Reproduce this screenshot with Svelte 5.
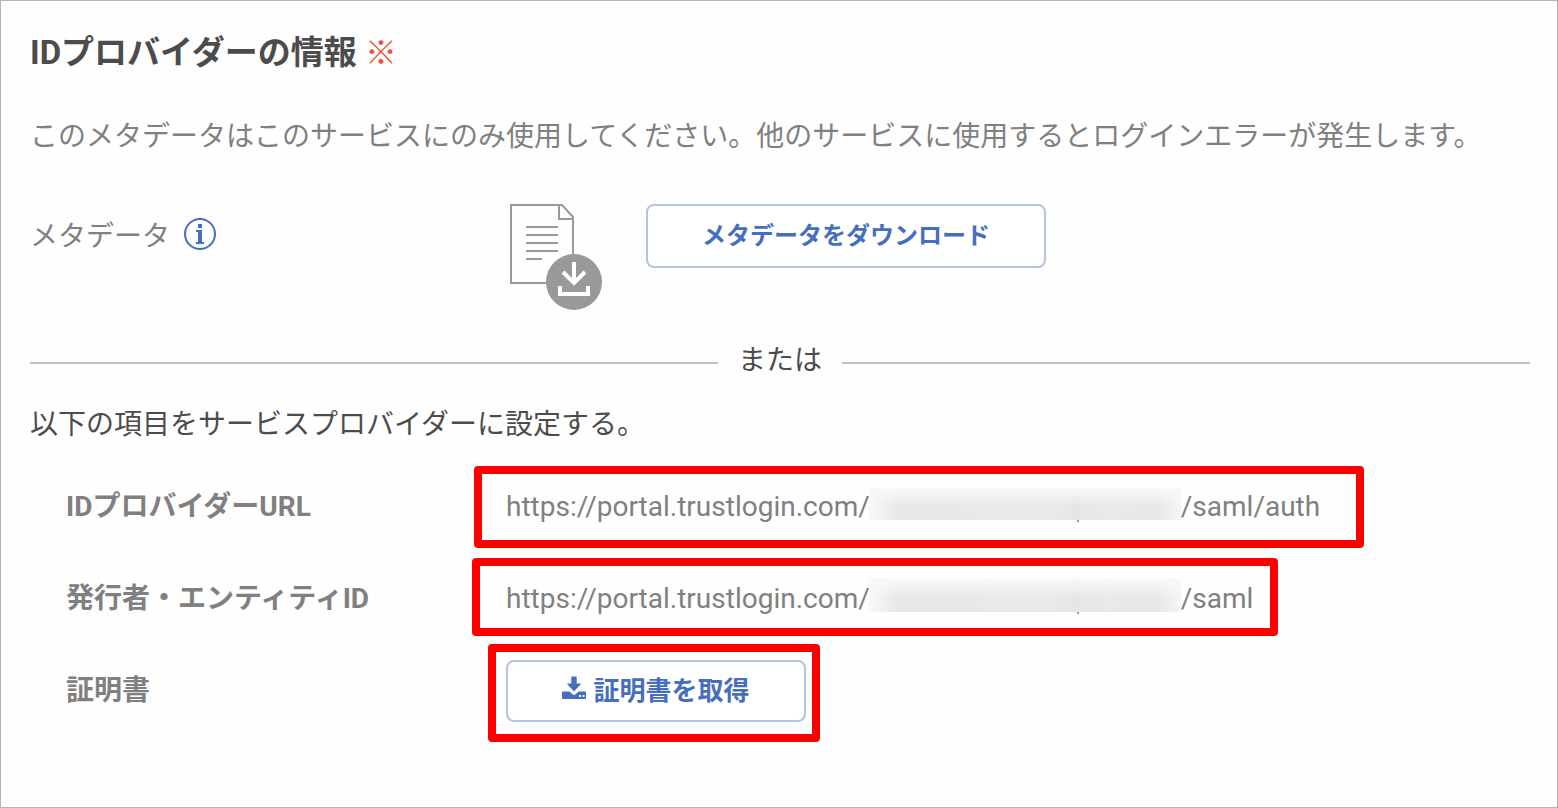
<script lang="ts">
  interface Endpoint {
    label: string;
    host: string;
    path: string;
    kind: string;
  }

  const endpoints: Endpoint[] = [
    { label: 'IDプロバイダーURL', host: 'https://portal.trustlogin.com/', path: '/saml/auth', kind: 'url' },
    { label: '発行者・エンティティID', host: 'https://portal.trustlogin.com/', path: '/saml', kind: 'entity' },
  ];
</script>

<section class="panel">
  <h1>IDプロバイダーの情報 <span class="required">※</span></h1>
  <p class="note">このメタデータはこのサービスにのみ使用してください。他のサービスに使用するとログインエラーが発生します。</p>

  <div class="metadata">
    <div class="meta-label">
      <span>メタデータ</span>
      <button class="info" type="button" aria-label="メタデータについて">
        <svg viewBox="0 0 32 32" width="32" height="32" fill="none">
          <circle cx="16" cy="16" r="15" stroke="#466ebe" stroke-width="2" />
          <path d="M14 6h4v4h-4zM12 12h6v12h2v2h-8v-2h2V14h-2z" fill="#466ebe" />
        </svg>
      </button>
    </div>
    <svg class="file" viewBox="0 0 92 106" width="92" height="106" fill="none">
      <path d="M1 1h51l11 12v66H1zM49 1v14h14" stroke="#999" stroke-width="2" />
      <path d="M16 23h32M16 31h32M16 39h32M16 47h32M16 55h16" stroke="#999" stroke-width="2" />
      <circle cx="64" cy="78" r="28" fill="#999" />
      <path d="M64 58v21M53 68l11 11 11-11" stroke="#fff" stroke-width="4" />
      <path d="M50 82v8h28v-8" stroke="#fff" stroke-width="4" />
    </svg>
    <button class="outline meta-btn" type="button">メタデータをダウンロード</button>
  </div>

  <div class="divider"><span>または</span></div>

  <p class="lead">以下の項目をサービスプロバイダーに設定する。</p>

  <dl>
    {#each endpoints as item}
      <div class="row">
        <dt>{item.label}</dt>
        <dd class={item.kind}>{item.host}<span class="masked"></span>{item.path}</dd>
      </div>
    {/each}
    <div class="row">
      <dt>証明書</dt>
      <dd class="cert">
        <button class="outline cert-btn" type="button">
          <svg viewBox="0 0 24 24" width="24" height="24" fill="#466ebe">
            <path d="M10 .5h4q.7 0 .7.7V7.500H18q1.200 0 .5 1L12.500 15q-.5.5-1 0L5.500 8.500q-.7-1 .5-1H9.300V1.200q0-.7.7-.7z" />
            <path fill-rule="evenodd" d="M1 15.500h6.500l3 2.800q1.500 1.200 3 0l3-2.800H23q1 0 1 1v5.500q0 1-1 1H1q-1 0-1-1v-5.500q0-1 1-1zM17 19v2h2v-2zM20.500 19v2h2v-2z" />
          </svg>
          <span>証明書を取得</span>
        </button>
      </dd>
    </div>
  </dl>
</section>

<style>
  :global(body) { background: #fefefe; }
  .panel { box-sizing: border-box; min-height: 100vh; padding: 28px 27px 24px 29px; border: 1px solid #b4b4b4; color: #808080; font-family: Roboto, "Noto Sans CJK JP", sans-serif; font-size: 28px; line-height: 40px; }
  h1 { margin: 0 0 40px; color: #4c4c4c; font-size: 33px; line-height: 48px; font-weight: 700; }
  .required { color: #f0503c; font-size: 32px; font-weight: 400; }
  p { margin: 0; }
  .metadata { display: flex; align-items: flex-start; margin: 47px 0 31px; }
  .meta-label { display: flex; align-items: center; gap: 14px; width: 480px; height: 66px; }
  .info { display: flex; padding: 0 0 6px; border: 0; background: none; cursor: pointer; }
  .file { margin-right: 44px; }
  .outline { display: flex; align-items: center; justify-content: center; box-sizing: border-box; padding: 0 0 6px; border: 2px solid #b4c3e1; border-radius: 8px; background: #fff; color: #466ebe; font-family: inherit; font-weight: 700; cursor: pointer; }
  .meta-btn { width: 400px; height: 64px; font-size: 24px; }
  .divider { display: flex; align-items: center; gap: 20px; color: #4c4c4c; }
  .divider::before, .divider::after { content: ""; flex: 1; height: 2px; margin-top: 4px; background: #c0c0c0; }
  .lead { margin: 24px 0 16px; color: #4c4c4c; }
  dl { margin: 0; padding-left: 36px; }
  .row { display: flex; align-items: center; height: 92px; }
  dt { width: 440px; font-weight: 700; }
  dd { position: relative; margin: 0; white-space: nowrap; }
  /* red callout frames drawn over the values */
  dd::after { content: ""; position: absolute; border: 8px solid #f00; border-radius: 4px; pointer-events: none; }
  .url::after { inset: -21px -44px -21px -32px; }
  .entity::after { inset: -21px -25px -17px -34px; }
  .cert::after { inset: -16px -14px -20px -18px; }
  .masked { position: relative; display: inline-block; width: 312px; height: 32px; margin-left: -1px; vertical-align: -4px; background: linear-gradient(#f9f9f9, #f9f9f900 60%), linear-gradient(90deg, #f8f8f8, #e6e6e6 10%, #e9e9e9 40%, #e9e9e9 60%, #e5e5e5 66%, #e9e9e9 76%, #e7e7e7 92%, #f5f5f5); }
  .entity .masked { height: 34px; margin-top: -2px; }
  .masked::after { content: ""; position: absolute; left: 208px; top: 100%; width: 2px; height: 2px; background: #999; }
  .cert-btn { gap: 7px; width: 300px; height: 62px; font-size: 26px; }
</style>
